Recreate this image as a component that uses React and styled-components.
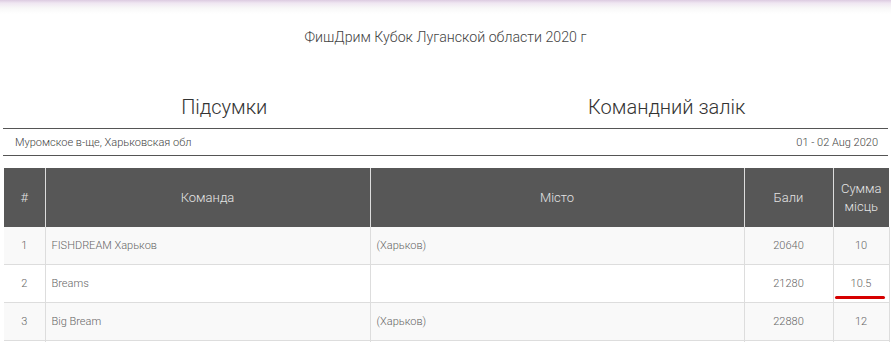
import React from 'react'
import styled, { createGlobalStyle } from 'styled-components'

const rows = [
  { place: 1, team: 'FISHDREAM Харьков', city: '(Харьков)', points: 20640, sum: '10' },
  { place: 2, team: 'Breams', city: '', points: 21280, sum: '10.5', marked: true },
  { place: 3, team: 'Big Bream', city: '(Харьков)', points: 22880, sum: '12' },
  { place: '', team: '', city: '', points: '', sum: '' },
]

function App() {
  return (
    <>
      <GlobalStyle />
      <TopShade />
      <Page>
        <Title>ФишДрим Кубок Луганской области 2020 г</Title>
        <Headings>
          <Heading>Підсумки</Heading>
          <Heading>Командний залік</Heading>
        </Headings>
        <InfoBar>
          <span>Муромское в-ще, Харьковская обл</span>
          <span>01 - 02 Aug 2020</span>
        </InfoBar>
        <Table>
          <colgroup>
            <col style={{ width: 41 }} />
            <col style={{ width: 325 }} />
            <col style={{ width: 374 }} />
            <col style={{ width: 89 }} />
            <col style={{ width: 56 }} />
          </colgroup>
          <thead>
            <tr>
              <Th>#</Th>
              <Th>Команда</Th>
              <Th>Місто</Th>
              <Th>Бали</Th>
              <Th>Сумма місць</Th>
            </tr>
          </thead>
          <tbody>
            {rows.map((r, i) => (
              <Row key={i} striped={i % 2 === 0}>
                <Td center>{r.place}</Td>
                <Td>{r.team}</Td>
                <Td>{r.city}</Td>
                <Td center>{r.points}</Td>
                <Td center>
                  {r.marked ? <Marked>{r.sum}</Marked> : r.sum}
                </Td>
              </Row>
            ))}
          </tbody>
        </Table>
      </Page>
    </>
  )
}

export default App

const GlobalStyle = createGlobalStyle`
 html, body {
  margin: 0;
  padding: 0;
  background: #fff;
  overflow: hidden;
 }
 body {
  font-family: Roboto, "Liberation Sans", sans-serif;
  font-weight: 300;
  color: #555;
 }
`

const TopShade = styled.div`
 height: 14px;
 margin-bottom: -14px;
 background: linear-gradient(#dccbe1 0px, #efe6f1 3px, #f8f8f8 8px, #ffffff 14px);
`

const Page = styled.div`
 padding: 0 3px;
`

const Title = styled.div`
 padding-top: 27px;
 height: 20px;
 line-height: 20px;
 text-align: center;
 font-size: 14.2px;
 color: #444;
`

const Headings = styled.div`
 display: grid;
 grid-template-columns: 1fr 1fr;
 margin-top: 40px;
 height: 40px;
 align-items: center;
`

const Heading = styled.h2`
 margin: 0;
 text-align: center;
 font-size: 20px;
 font-weight: 300;
 color: #333;
`

const InfoBar = styled.div`
 margin-top: 1px;
 display: flex;
 justify-content: space-between;
 align-items: center;
 height: 26px;
 padding: 0 10px 0 12px;
 border-top: 1.5px solid #555;
 border-bottom: 1.5px solid #555;
 font-size: 11px;
 color: #444;
`

const Table = styled.table`
 margin: 12px 0 0 1px;
 table-layout: fixed;
 border-collapse: collapse;
 width: 885px;
`

const Th = styled.th`
 height: 59px;
 padding: 0 4px;
 background: #575757;
 color: #e4e4e4;
 font-weight: 300;
 font-size: 13px;
 line-height: 18px;
 text-align: center;
 border-left: 1px solid #ddd;
 &:first-child { border-left: none; }
`

const Row = styled.tr`
 background: ${(p) => (p.striped ? '#f9f9f9' : '#fff')};
`

const Td = styled.td`
 height: 37px;
 padding: 0 6px;
 font-size: 11px;
 color: #666;
 text-align: ${(p) => (p.center ? 'center' : 'left')};
 border: 1px solid #ddd;
 border-top: none;
 &:first-child { border-left: none; }
`

const Marked = styled.span`
 position: relative;
 &::after {
  content: '';
  position: absolute;
  left: -16px;
  right: -14px;
  bottom: -9px;
  height: 3px;
  border-radius: 2px;
  background: #d60000;
 }
`
